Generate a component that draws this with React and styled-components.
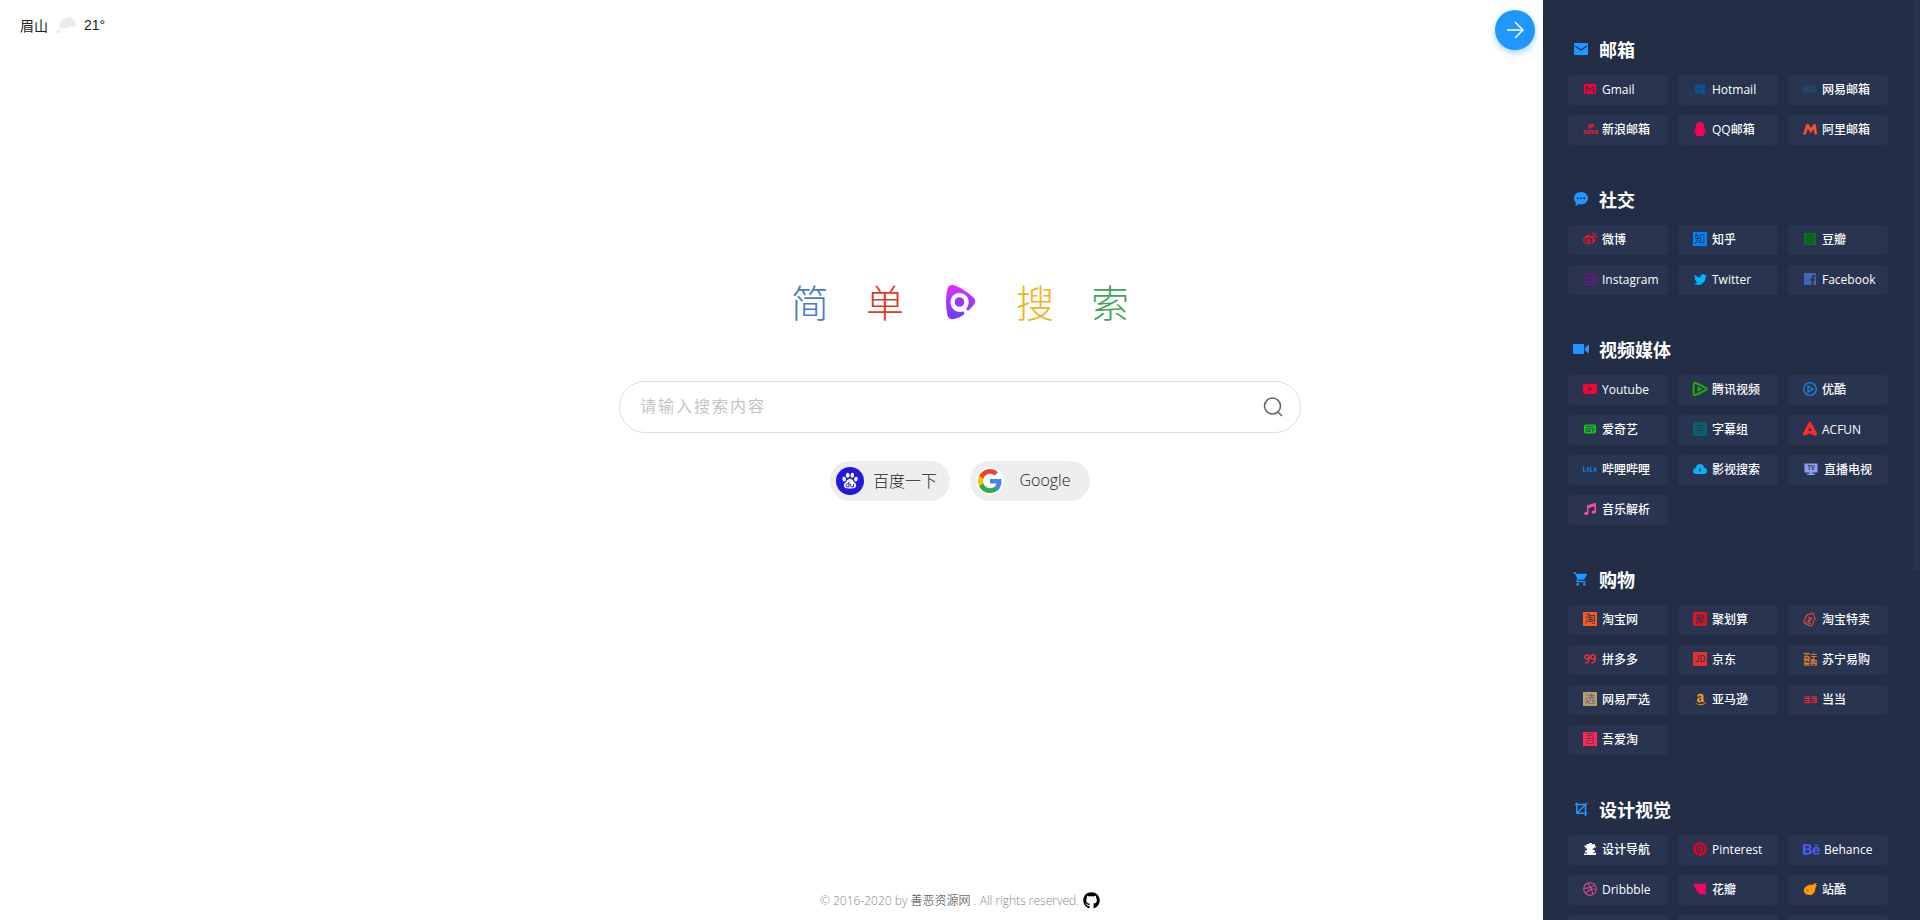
import React from "react";
import styled, { createGlobalStyle } from "styled-components";
import {
  FaWindows,
  FaWeibo,
  FaQq,
  FaInstagram,
  FaTwitter,
  FaMusic,
  FaAmazon,
  FaPinterest,
  FaBehance,
  FaDribbble,
  FaGithub,
} from "react-icons/fa";
import { MdShoppingCart } from "react-icons/md";

const PANEL = "#232e46";
const TILE = "#293450";
const BLUE = "#2196ff";

const GlobalStyle = createGlobalStyle`
  * { box-sizing: border-box; }
  body {
    margin: 0;
    background: #fff;
    color: #222;
    font-family: "Open Sans", "Noto Sans CJK SC", sans-serif;
    font-size: 12px;
  }
  a { color: inherit; text-decoration: none; }
  ul { list-style: none; margin: 0; padding: 0; }
  svg { display: block; }
`;

const Page = styled.div`
  min-height: 100vh;
  display: flex;
  flex-direction: column;
`;

const Weather = styled.header`
  display: flex;
  align-items: center;
  gap: 8px;
  height: 50px;
  padding: 0 20px;
  font-family: "Liberation Sans", "Noto Sans CJK SC", sans-serif;
  font-size: 14px;
`;

const Search = styled.main`
  display: flex;
  flex-direction: column;
  align-items: center;
  padding-top: 24vh;
`;

const Logo = styled.h1`
  display: flex;
  margin: 0 0 48px;
  height: 62px;
  font-size: 38px;
  font-weight: 200;
  line-height: 62px;
`;

const LogoPart = styled.span`
  display: flex;
  align-items: center;
  justify-content: center;
  width: 75px;
  color: ${(p) => p.$color};
`;

const Form = styled.form`
  display: flex;
  align-items: center;
  width: 682px;
  max-width: 90%;
  height: 52px;
  padding: 0 16px 0 20px;
  border: 1px solid #ddd;
  border-radius: 26px;
`;

const Input = styled.input`
  flex: 1;
  min-width: 0;
  height: 100%;
  padding: 0 0 2px;
  border: 0;
  outline: 0;
  background: transparent;
  color: #222;
  font: 400 16px "Open Sans", "Noto Sans CJK SC", sans-serif;
  letter-spacing: 2px;
  &::placeholder { color: #c4c4c4; opacity: 1; }
`;

const SubmitButton = styled.button`
  padding: 0;
  border: 0;
  background: none;
  color: #666;
  cursor: pointer;
`;

const Engines = styled.div`
  display: flex;
  gap: 20px;
  margin-top: 28px;
`;

const EngineButton = styled.button`
  display: flex;
  align-items: center;
  width: 120px;
  height: 40px;
  padding: 0 6px;
  border: 0;
  border-radius: 20px;
  background: #eee;
  color: #222;
  font: 300 16px "Open Sans", "Noto Sans CJK SC", sans-serif;
  cursor: pointer;
`;

const EngineName = styled.span`
  flex: 1;
  padding: 0 0 2px 2px;
  text-align: center;
`;

const Footer = styled.footer`
  display: flex;
  align-items: center;
  justify-content: center;
  gap: 4px;
  height: 24px;
  margin: auto 0 8px;
  color: #888;
  font-weight: 300;
  a { color: #333; }
`;

const CollapseButton = styled.button`
  position: fixed;
  top: 10px;
  right: 385px;
  display: flex;
  align-items: center;
  justify-content: center;
  width: 40px;
  height: 40px;
  padding: 0;
  border: 0;
  border-radius: 50%;
  background: ${BLUE};
  box-shadow: 0 3px 6px rgba(33, 150, 255, 0.4);
  cursor: pointer;
`;

const Panel = styled.aside`
  position: fixed;
  top: 0;
  right: 0;
  bottom: 0;
  width: 377px;
  padding: 25px 25px 0;
  overflow: hidden;
  background: ${PANEL};
  color: #fff;
`;

const ScrollThumb = styled.div`
  position: absolute;
  top: 0;
  right: 0;
  width: 6px;
  height: 62%;
  background: ${TILE};
`;

const Section = styled.section`
  margin-bottom: 30px;
`;

const SectionTitle = styled.h2`
  display: flex;
  align-items: center;
  gap: 10px;
  height: 50px;
  margin: 0;
  padding: 0 0 2px 5px;
  font-size: 18px;
  font-weight: 700;
  svg { color: ${BLUE}; }
`;

const LinkGrid = styled.ul`
  display: grid;
  grid-template-columns: repeat(3, 100px);
  gap: 10px;
`;

const Tile = styled.li`
  height: 30px;
  border-radius: 4px;
  background: ${TILE};
`;

const TileLink = styled.a`
  display: flex;
  align-items: center;
  gap: 4px;
  height: 100%;
  padding: 0 0 2px 14px;
  font-weight: 500;
  white-space: nowrap;
`;

const IconBox = styled.span`
  display: flex;
  align-items: center;
  justify-content: center;
  width: ${(p) => (p.$wide ? 18 : 16)}px;
  height: 16px;
  color: ${(p) => p.$color};
`;

const Svg = ({ children, size = 16 }) => (
  <svg width={size} height={size} viewBox="0 0 16 16" fill="currentColor" aria-hidden="true">
    {children}
  </svg>
);

const Glyph = ({ text, size = 10, y = 12, ...rest }) => (
  <text
    x="8"
    y={y}
    textAnchor="middle"
    fontSize={size}
    fontFamily='"Noto Sans CJK SC", sans-serif'
    {...rest}
  >
    {text}
  </text>
);

const Stamp = ({ text, inset = 1, radius = 0, size = 11, y = 12, ink = TILE }) => (
  <Svg>
    <rect x={inset} y={inset} width={16 - inset * 2} height={16 - inset * 2} rx={radius} />
    <Glyph text={text} size={size} y={y} fill={ink} fontWeight="400" />
  </Svg>
);

const mailIcon = (
  <Svg>
    <path d="M2 2h12a1 1 0 0 1 1 1v10a1 1 0 0 1-1 1H2a1 1 0 0 1-1-1V3a1 1 0 0 1 1-1z" />
    <path d="M2 5l6 4 6-4" fill="none" stroke={PANEL} strokeWidth="1.3" />
  </Svg>
);

const chatIcon = (
  <Svg>
    <path d="M8 1c4.1 0 7 2.8 7 6.200S12.100 13.400 8 13.400c-.8 0-1.500-.1-2.200-.3L2.600 15.200l.2-3.500C1.600 10.500 1 9 1 7.200 1 3.800 3.900 1 8 1z" />
    <g fill={PANEL}>
      <circle cx="4.800" cy="7.200" r="1" />
      <circle cx="8" cy="7.200" r="1" />
      <circle cx="11.200" cy="7.200" r="1" />
    </g>
  </Svg>
);

const videoIcon = (
  <Svg>
    <rect x="0" y="3" width="11" height="10" rx="1" />
    <path d="M12 6.500l4-3v9l-4-3z" />
  </Svg>
);

const cropIcon = (
  <Svg>
    <path
      d="M2 3.500h10.500V15M3.800 1.500v10.800H14M14 2L4 12"
      fill="none"
      stroke="currentColor"
      strokeWidth="1.500"
    />
  </Svg>
);

const gmailIcon = (
  <Svg>
    <rect x="2" y="3" width="12" height="10" rx="1" />
    <path d="M4.500 12V5.500L8 8.600l3.500-3.100V12" fill="none" stroke={TILE} strokeWidth="1.200" />
  </Svg>
);

const sinaIcon = (
  <Svg>
    <path d="M5 5.500C7 2 12.200 1.800 12.400 4.600c0 1.200-.8 1.800-1.600 2C11 4.800 8.400 4 5 5.500z" />
    <path d="M6 7c1-2.400 4-2.600 4.200-.8L8 7.200z" />
    <Glyph text="sina" size={7.500} y={12.500} fontStyle="italic" fontWeight="900" />
  </Svg>
);

const aliIcon = (
  <Svg>
    <path d="M1 13.500L4.200 3.200h2.900L9 7.200l2.400-4h2.400L15.200 13.500h-2.700l-1-5.500-2.700 4.200L5.800 7.600 3.900 13.500z" />
  </Svg>
);

const doubanIcon = (
  <Svg>
    <rect x="2" y="2" width="12" height="12" />
    <path
      d="M4 4.300h8M5.300 6.300h5.400v3H5.300zM5.800 10v2M10.200 10v2M3.800 12.200h8.400"
      fill="none"
      stroke="#1c4a3d"
      strokeWidth="1"
    />
  </Svg>
);

const facebookIcon = (
  <Svg>
    <rect x="2" y="2" width="12" height="12" />
    <path d="M9.600 14V9.600H8V7.800h1.600V6.300c0-1.600 1-2.300 2.300-2.300h1.500v1.700h-1c-.7 0-.9.3-.9.900v1.200h1.800l-.2 1.800h-1.600V14z" fill={TILE} />
  </Svg>
);

const youtubeIcon = (
  <Svg>
    <rect x="1" y="3" width="14" height="10" rx="2" />
    <path d="M6.500 5.800v4.400L10.300 8z" fill={TILE} />
  </Svg>
);

const tencentIcon = (
  <Svg>
    <path
      d="M1.900 2.600Q2.200 1.500 3.500 2C8 3.600 11.500 5.600 14.300 7.300q1 .7 0 1.400C11.500 10.400 8 12.600 3.500 14q-1.300.4-1.600-.6Q1.200 8 1.900 2.600z"
      fill="none"
      stroke="currentColor"
      strokeWidth="2"
    />
    <path d="M5.500 5.200L10.500 8l-5 2.800z" />
  </Svg>
);

const youkuIcon = (
  <Svg>
    <circle cx="8" cy="8" r="6.300" fill="none" stroke="currentColor" strokeWidth="1.300" />
    <path d="M6 5l5 3-5 3z" fill="none" stroke="currentColor" strokeWidth="1.300" />
  </Svg>
);

const iqiyiIcon = (
  <Svg>
    <rect x="2" y="3.500" width="12" height="9" rx="2" />
    <path d="M3.500 5.200h9M4.300 6.500V11M6 7h2v3.500H6zM10 6.500V9q1 .8 2 0V6.500M11 9.500V11.500" fill="none" stroke={TILE} strokeWidth="0.8" />
  </Svg>
);

const acfunIcon = (
  <Svg>
    <path d="M8 1c.7 0 1.200.5 1.600 1.200L15.300 13l-1.800 2L8 12.400 2.500 15 .7 13 6.400 2.200C6.800 1.500 7.300 1 8 1z" />
    <path d="M8 6.200L10 10H6z" fill={TILE} />
  </Svg>
);

const bilibiliIcon = (
  <Svg>
    <path
      d="M1.600 5v5.600h2M5 10.600L6 6l1.300 4.600M8.800 5.500v5.100h1.800M12 10.600L13 6l1.300 4.600M5.400 9h1.500M12.400 9H14"
      fill="none"
      stroke="currentColor"
      strokeWidth="1.200"
    />
  </Svg>
);

const cloudIcon = (
  <Svg>
    <path d="M4.300 13C2.300 13 1 11.800 1 10c0-1.600 1.100-2.800 2.700-3C4.200 4.600 5.900 3 8 3s3.800 1.600 4.200 3.800C13.900 7 15 8.300 15 9.900c0 1.800-1.300 3.100-3.200 3.100z" />
    <path d="M7 6.800V11l3-2.100z" fill={TILE} />
  </Svg>
);

const tvIcon = (
  <Svg>
    <path d="M1.500 2.500h13v9h-5v1.200H12V14H4v-1.300h2.500v-1.200h-5z" />
    <Glyph text="TV" size={6} y={9} fill={TILE} fontWeight="700" />
  </Svg>
);

const saleTagIcon = (
  <Svg>
    <g fill="none" stroke="currentColor" strokeWidth="1.200" transform="rotate(25 8 8)">
      <path d="M3.500 5.500L8 1.500l4.500 4v6.500q0 2-2 2h-5q-2 0-2-2z" />
      <path d="M5.500 7h5M8 7v5M6 9.500h4M5.500 12h5" />
    </g>
  </Svg>
);

const suningIcon = (
  <Svg>
    <Glyph text="苏宁" size={7} y={7.500} fontWeight="700" />
    <Glyph text="易购" size={7} y={14} fontWeight="700" />
  </Svg>
);

const ninesIcon = (
  <Svg>
    <g fill="none" stroke="currentColor" strokeWidth="1.500">
      <circle cx="5" cy="6" r="2" />
      <path d="M7 6v2.500q0 3-3.800 3.500" />
      <circle cx="11" cy="6" r="2" />
      <path d="M13 6v2.500q0 3-3.800 3.500" />
    </g>
  </Svg>
);

const guideIcon = (
  <Svg>
    <path d="M7 2h3v1.200h3v2h1v1.300h-2v1.100h-1.300v1.500H13v1.600h-1.500v1h2.500V14h-12v-1.500h3v-1.100H3V9.500h2V7.600H3.500V6H2.500V4.600h2V3H7z" />
  </Svg>
);

const petalIcon = (
  <Svg>
    <path d="M2.300 2.500C4 2.200 5.600 2.500 6.600 3.300 7.600 2.500 9 2.200 10.200 2.700 11.300 2 12.700 2 13.800 2.500V13.500C10 14 6.500 13 5.300 10 3.300 8 2 5.500 2.300 2.500z" />
  </Svg>
);

const zcoolIcon = (
  <Svg>
    <path d="M2 8C3 5 6.500 4.800 8.500 3L8.300 4.200C10.500 4 12.500 2.500 14.500 1.800L13.700 4.500l1.200-.3-1.600 3C13.600 11 11 14 7.500 14 3.500 14 1 11.200 2 8z" />
    <path d="M4.500 9.700h2" stroke={TILE} strokeWidth="0.700" />
  </Svg>
);

const sections = [
  {
    title: "邮箱",
    icon: mailIcon,
    links: [
      ["Gmail", "#ff0036", gmailIcon],
      ["Hotmail", "#0b5394", <FaWindows size={12} />],
      ["网易邮箱", "#1f4f7a", <Svg><Glyph text="网易" size={7} y={10.500} fontWeight="700" /></Svg>],
      ["新浪邮箱", "#d8222f", sinaIcon],
      ["QQ邮箱", "#ff0057", <FaQq size={14} />],
      ["阿里邮箱", "#ff4c2b", aliIcon],
    ],
  },
  {
    title: "社交",
    icon: chatIcon,
    links: [
      ["微博", "#e6162d", <FaWeibo size={14} />],
      ["知乎", "#0084ff", <Stamp text="知" />],
      ["豆瓣", "#077518", doubanIcon],
      ["Instagram", "#8a0f92", <FaInstagram size={13} />],
      ["Twitter", "#00b4ff", <FaTwitter size={13} />],
      ["Facebook", "#4267b2", facebookIcon],
    ],
  },
  {
    title: "视频媒体",
    icon: videoIcon,
    links: [
      ["Youtube", "#ff0033", youtubeIcon],
      ["腾讯视频", "#23ab0b", tencentIcon],
      ["优酷", "#1589e8", youkuIcon],
      ["爱奇艺", "#17c81b", iqiyiIcon],
      ["字幕组", "#075f70", <Stamp text="字" radius={1} size={10} ink="#253d55" />],
      ["ACFUN", "#ff2b2b", acfunIcon],
      ["哔哩哔哩", "#1279d2", bilibiliIcon],
      ["影视搜索", "#00b4ff", cloudIcon],
      ["直播电视", "#8d9df0", tvIcon, true],
      ["音乐解析", "#ff4b9b", <FaMusic size={12} />],
    ],
  },
  {
    title: "购物",
    icon: <MdShoppingCart size={16} />,
    links: [
      ["淘宝网", "#ff5a1e", <Stamp text="淘" />],
      ["聚划算", "#dd1422", <Stamp text="聚" radius={2} size={10} />],
      ["淘宝特卖", "#e0483e", saleTagIcon],
      ["拼多多", "#e8333e", ninesIcon],
      ["京东", "#e53033", <Stamp text="JD" size={9} y={11} />],
      ["苏宁易购", "#e6832a", suningIcon],
      ["网易严选", "#b59e73", <Stamp text="选" ink="#6f6a62" />],
      ["亚马逊", "#ff9a1e", <FaAmazon size={13} />],
      ["当当", "#ef2438", <Svg><Glyph text="当当" size={7} y={10.500} fontWeight="900" /></Svg>],
      ["吾爱淘", "#ff2850", <Stamp text="吾" ink="#7d2c50" />],
    ],
  },
  {
    title: "设计视觉",
    icon: cropIcon,
    links: [
      ["设计导航", "#ffffff", guideIcon],
      ["Pinterest", "#e60023", <FaPinterest size={14} />],
      ["Behance", "#4b5cff", <FaBehance size={17} />, true],
      ["Dribbble", "#ea4c89", <FaDribbble size={14} />],
      ["花瓣", "#ff0066", petalIcon],
      ["站酷", "#ff9a00", zcoolIcon],
    ],
    pending: 3,
  },
];

const CloudyIcon = () => (
  <svg width="20" height="18" viewBox="0 0 20 18" fill="#ebebeb" role="img" aria-label="多云">
    <path d="M6 12.500C2.500 12.500 2 8 5 7 4.500 3.500 8 1.500 10 3c1.500-3 6-2.500 6.500.5C19.500 4 20.500 8 19 10.500c-1 .5-2.500 0-4-.5-1.500 1.500-3.500 2-5 1-1 1.200-2.500 1.600-4 1.500z" />
    <ellipse cx="2.500" cy="15.500" rx="2.300" ry="1.600" />
  </svg>
);

const BrandMark = () => (
  <svg width="32" height="36" viewBox="0 0 32 36" aria-hidden="true">
    <defs>
      <linearGradient id="brand" x1="0" y1="0" x2="0" y2="1">
        <stop offset="0" stopColor="#e52cff" />
        <stop offset="1" stopColor="#6a3cff" />
      </linearGradient>
    </defs>
    <path
      d="M3.500 4.500C4.500 1.500 6.500.5 10 1.200c7 2.300 14 7.300 19.500 12.300 2.300 2.300 2.300 4.800.5 7l-4.500 5c-2 1.500-3 .9-3.200-.8 3.200-4 3.100-9.200.3-12.500C18.500 7.500 11.500 8 8.200 12.500 4.500 18 7 25.500 13 27.500c2.500.7 4.500.3 6.200.1 1.600.9 1.400 2.400.2 3.400-3 2-6 3-9.400 4-3.500.6-5.500-.5-6.500-3.500-2-9-2-18 0-27z"
      fill="url(#brand)"
    />
    <circle cx="15.500" cy="18" r="4.800" fill="#9b35ff" />
  </svg>
);

const BaiduIcon = () => (
  <svg width="28" height="28" viewBox="0 0 28 28" aria-hidden="true">
    <circle cx="14" cy="14" r="14" fill="#2319dc" />
    <g fill="#fff">
      <ellipse cx="8.200" cy="12.200" rx="1.800" ry="2.400" transform="rotate(-12 8.200 12.200)" />
      <ellipse cx="11.700" cy="8.300" rx="1.800" ry="2.500" />
      <ellipse cx="16.300" cy="8.300" rx="1.800" ry="2.500" transform="rotate(8 16.300 8.300)" />
      <ellipse cx="19.900" cy="12.200" rx="1.800" ry="2.400" transform="rotate(12 19.900 12.200)" />
      <path d="M14 11.800c2 0 2.700 1.800 4 3.200 1.600 1.500 2.500 2.700 2.100 4.300-.5 2-2.300 2.300-6.100 2.200-3.800.1-5.600-.2-6.100-2.200-.4-1.600.5-2.800 2.100-4.300 1.300-1.400 2-3.200 4-3.200z" />
    </g>
    <path
      d="M13 15v4.800h-1.700c-1.700 0-1.700-2.900 0-2.900H13M14.700 16.800v2.100q0 .9.900.9h1.900v-3"
      fill="none"
      stroke="#2319dc"
      strokeWidth="1"
    />
  </svg>
);

const GoogleIcon = () => (
  <svg width="28" height="28" viewBox="0 0 28 28" aria-hidden="true">
    <circle cx="14" cy="14" r="14" fill="#fff" />
    <g transform="translate(2 2)">
      <path fill="#4285f4" d="M23.500 12.300c0-.8-.1-1.600-.2-2.300H12v4.600h6.500a5.600 5.600 0 0 1-2.400 3.600v3h3.900c2.200-2.100 3.500-5.200 3.500-8.900z" />
      <path fill="#34a853" d="M12 24c3.200 0 6-1.100 8-2.900l-3.900-3c-1.100.7-2.500 1.200-4.100 1.200-3.100 0-5.800-2.100-6.700-5H1.300v3.100A12 12 0 0 0 12 24z" />
      <path fill="#fbbc05" d="M5.300 14.300a7.200 7.200 0 0 1 0-4.600V6.600h-4a12 12 0 0 0 0 10.800z" />
      <path fill="#ea4335" d="M12 4.800c1.800 0 3.300.6 4.600 1.800L20 3.200A12 12 0 0 0 1.300 6.600l4 3.100c.9-2.800 3.600-4.900 6.700-4.900z" />
    </g>
  </svg>
);

const LinkTile = ({ link: [name, color, icon, wide] }) => (
  <Tile>
    <TileLink href="#">
      <IconBox $color={color} $wide={wide}>{icon}</IconBox>
      {name}
    </TileLink>
  </Tile>
);

export default function App() {
  return (
    <Page>
      <GlobalStyle />
      <Weather>
        <span>眉山</span>
        <CloudyIcon />
        <span>21°</span>
      </Weather>

      <Search>
        <Logo>
          <LogoPart $color="#4a7bc8">简</LogoPart>
          <LogoPart $color="#dd3b25">单</LogoPart>
          <LogoPart><BrandMark /></LogoPart>
          <LogoPart $color="#edb41c">搜</LogoPart>
          <LogoPart $color="#3da553">索</LogoPart>
        </Logo>
        <Form onSubmit={(e) => e.preventDefault()}>
          <Input type="text" aria-label="搜索" placeholder="请输入搜索内容" />
          <SubmitButton type="submit" aria-label="搜索">
            <svg width="22" height="24" viewBox="0 0 22 24" fill="none" stroke="currentColor" strokeWidth="1.600">
              <circle cx="10.500" cy="11" r="8" />
              <path d="M16 17l4 4" />
            </svg>
          </SubmitButton>
        </Form>
        <Engines>
          <EngineButton type="button">
            <BaiduIcon />
            <EngineName>百度一下</EngineName>
          </EngineButton>
          <EngineButton type="button">
            <GoogleIcon />
            <EngineName>Google</EngineName>
          </EngineButton>
        </Engines>
      </Search>

      <Footer>
        <span>
          © 2016-2020 by <a href="#">善恶资源网</a> . All rights reserved.
        </span>
        <a href="#" aria-label="GitHub"><FaGithub size={17} color="#000" /></a>
      </Footer>

      <CollapseButton type="button" aria-label="收起">
        <svg width="18" height="18" viewBox="0 0 18 18" fill="none" stroke="#fff" strokeWidth="1.500">
          <path d="M1 9h16M9 1l8 8-8 8" />
        </svg>
      </CollapseButton>

      <Panel>
        {sections.map((section) => (
          <Section key={section.title}>
            <SectionTitle>
              {section.icon}
              {section.title}
            </SectionTitle>
            <LinkGrid>
              {section.links.map((link) => (
                <LinkTile key={link[0]} link={link} />
              ))}
              {Array.from({ length: section.pending || 0 }, (_, i) => (
                <Tile key={i} />
              ))}
            </LinkGrid>
          </Section>
        ))}
        <ScrollThumb />
      </Panel>
    </Page>
  );
}
